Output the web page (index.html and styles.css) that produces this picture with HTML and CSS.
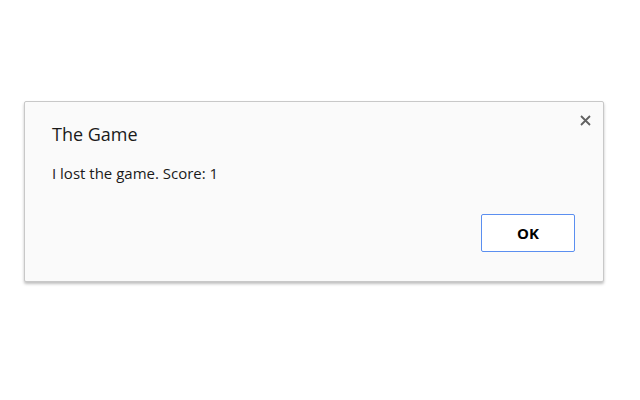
FILE: index.html
```html
<!DOCTYPE html>
<html>
<head>
<meta charset="utf-8">
<link rel="stylesheet" href="styles.css">
</head>
<body>
<div class="dialog">
  <div class="close" aria-label="Close">
    <svg width="11" height="11" viewBox="0 0 11 11"><path d="M1 1L10 10M10 1L1 10" stroke="#616161" stroke-width="1.8"/></svg>
  </div>
  <div class="title">The Game</div>
  <div class="message">I lost the game. Score: 1</div>
  <div class="actions">
    <button class="ok">OK</button>
  </div>
</div>
</body>
</html>
```
FILE: styles.css
```css
html, body {
  margin: 0;
  padding: 0;
  background: #ffffff;
}
body {
  width: 640px;
  height: 400px;
  overflow: hidden;
  font-family: "Open Sans", "Noto Sans", sans-serif;
  color: #000;
}
.dialog {
  position: relative;
  box-sizing: border-box;
  margin: 101px 0 0 24px;
  width: 580px;
  height: 181px;
  background: #fafafa;
  border: 1px solid #c8c8c8;
  border-radius: 2px;
  box-shadow: 0 2px 3px rgba(0,0,0,0.25);
  padding: 20px 28px 0 27px;
}
.close {
  position: absolute;
  top: 13px;
  right: 12px;
  width: 11px;
  height: 11px;
  display: flex;
}
.title {
  font-size: 18px;
  line-height: 24px;
  color: #1a1a1a;
}
.message {
  margin-top: 17px;
  font-size: 15px;
  line-height: 21px;
  color: #1a1a1a;
}
.actions {
  display: flex;
  justify-content: flex-end;
  margin-top: 30px;
}
.ok {
  box-sizing: border-box;
  width: 94px;
  height: 38px;
  background: #ffffff;
  border: 1px solid #5b8ff0;
  border-radius: 2px;
  font-family: "Open Sans", "Noto Sans", sans-serif;
  font-weight: 700;
  font-size: 15px;
  color: #000;
  padding: 0;
}
```
